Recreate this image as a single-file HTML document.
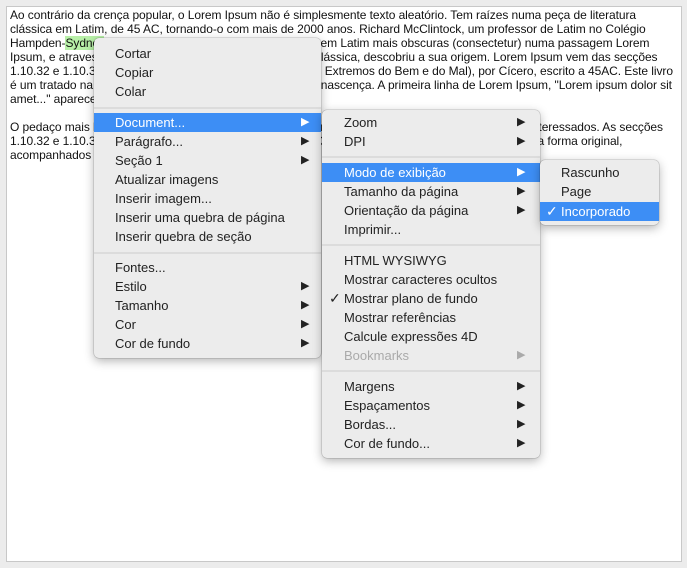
<!DOCTYPE html>
<html><head><meta charset="utf-8"><style>
*{margin:0;padding:0;box-sizing:border-box}
body{width:687px;height:568px;background:#ececec;position:relative;overflow:hidden;font-family:"Liberation Sans",Arial,sans-serif}
#doc{position:absolute;left:6px;top:6px;width:676px;height:556px;background:#fff;border:1px solid #c8c8c8;padding:1px 2px 1px 3px;font-size:12px;line-height:14px;color:#111;letter-spacing:-0.07px}
#doc p{margin-bottom:14px}
.hl{background:#b8f0a8}
.m{position:absolute;background:#ececec;border-radius:5px;box-shadow:0 3px 10px rgba(0,0,0,.3),0 0 0 .5px rgba(0,0,0,.2);font-size:13px;color:#222}
.i{position:absolute;left:0;right:0;height:19px;line-height:19px}
.i.s{background:#3d8ef5;color:#fff}
.i.d{color:#aaa}
.a{position:absolute;font-size:11px;top:0}
.sep{position:absolute;left:0;right:0;height:2px;background:#dcdcdc}
.ck{position:absolute;font-size:14px}
</style></head><body>
<div id="doc"><p>Ao contrário da crença popular, o Lorem Ipsum não é simplesmente texto aleatório. Tem raízes numa peça de literatura clássica em Latim, de 45 AC, tornando-o com mais de 2000 anos. Richard McClintock, um professor de Latim no Colégio Hampden-<span class="hl">Sydney</span>, na Virgínia, procurou uma das palavras em Latim mais obscuras (consectetur) numa passagem Lorem Ipsum, e atravessando as cidades do mundo na literatura clássica, descobriu a sua origem. Lorem Ipsum vem das secções 1.10.32 e 1.10.33 do "de Finibus Bonorum et Malorum" (Os Extremos do Bem e do Mal), por Cícero, escrito a 45AC. Este livro é um tratado na teoria da ética, muito popular durante a Renascença. A primeira linha de Lorem Ipsum, "Lorem ipsum dolor sit amet..." aparece de uma linha na secção 1.10.32.</p>
<p>O pedaço mais habitual do Lorem Ipsum usado desde os anos 1500 é reproduzido abaixo para os interessados. As secções 1.10.32 e 1.10.33 do "de Finibus Bonorum et Malorum" de Cícero também foram reproduzidas na sua forma original, acompanhados pela versão Inglesa da tradução feita por H. Rackham em 1914.</p></div>

<div class="m" style="left:94px;top:38px;width:227px;height:320px">
<div class="i" style="top:6px;padding-left:21px">Cortar</div>
<div class="i" style="top:25px;padding-left:21px">Copiar</div>
<div class="i" style="top:44px;padding-left:21px">Colar</div>
<div class="sep" style="top:69px"></div>
<div class="i s" style="top:75px;padding-left:21px">Document...<span class="a" style="left:207px">▶</span></div>
<div class="i" style="top:94px;padding-left:21px">Parágrafo...<span class="a" style="left:207px">▶</span></div>
<div class="i" style="top:113px;padding-left:21px">Seção 1<span class="a" style="left:207px">▶</span></div>
<div class="i" style="top:132px;padding-left:21px">Atualizar imagens</div>
<div class="i" style="top:151px;padding-left:21px">Inserir imagem...</div>
<div class="i" style="top:170px;padding-left:21px">Inserir uma quebra de página</div>
<div class="i" style="top:189px;padding-left:21px">Inserir quebra de seção</div>
<div class="sep" style="top:214px"></div>
<div class="i" style="top:220px;padding-left:21px">Fontes...</div>
<div class="i" style="top:239px;padding-left:21px">Estilo<span class="a" style="left:207px">▶</span></div>
<div class="i" style="top:258px;padding-left:21px">Tamanho<span class="a" style="left:207px">▶</span></div>
<div class="i" style="top:277px;padding-left:21px">Cor<span class="a" style="left:207px">▶</span></div>
<div class="i" style="top:296px;padding-left:21px">Cor de fundo<span class="a" style="left:207px">▶</span></div>
</div>

<div class="m" style="left:322px;top:110px;width:218px;height:348px">
<div class="i" style="top:3px;padding-left:22px">Zoom<span class="a" style="left:195px">▶</span></div>
<div class="i" style="top:22px;padding-left:22px">DPI<span class="a" style="left:195px">▶</span></div>
<div class="sep" style="top:46px"></div>
<div class="i s" style="top:53px;padding-left:22px">Modo de exibição<span class="a" style="left:195px">▶</span></div>
<div class="i" style="top:72px;padding-left:22px">Tamanho da página<span class="a" style="left:195px">▶</span></div>
<div class="i" style="top:91px;padding-left:22px">Orientação da página<span class="a" style="left:195px">▶</span></div>
<div class="i" style="top:110px;padding-left:22px">Imprimir...</div>
<div class="sep" style="top:134px"></div>
<div class="i" style="top:141px;padding-left:22px">HTML WYSIWYG</div>
<div class="i" style="top:160px;padding-left:22px">Mostrar caracteres ocultos</div>
<div class="i" style="top:179px;padding-left:22px"><span class="ck" style="left:7px">✓</span>Mostrar plano de fundo</div>
<div class="i" style="top:198px;padding-left:22px">Mostrar referências</div>
<div class="i" style="top:217px;padding-left:22px">Calcule expressões 4D</div>
<div class="i d" style="top:236px;padding-left:22px">Bookmarks<span class="a" style="left:195px">▶</span></div>
<div class="sep" style="top:260px"></div>
<div class="i" style="top:267px;padding-left:22px">Margens<span class="a" style="left:195px">▶</span></div>
<div class="i" style="top:286px;padding-left:22px">Espaçamentos<span class="a" style="left:195px">▶</span></div>
<div class="i" style="top:305px;padding-left:22px">Bordas...<span class="a" style="left:195px">▶</span></div>
<div class="i" style="top:324px;padding-left:22px">Cor de fundo...<span class="a" style="left:195px">▶</span></div>
</div>

<div class="m" style="left:540px;top:160px;width:119px;height:65px">
<div class="i" style="top:3px;padding-left:21px">Rascunho</div>
<div class="i" style="top:22px;padding-left:21px">Page</div>
<div class="i s" style="top:42px;padding-left:21px"><span class="ck" style="left:6px">✓</span>Incorporado</div>
</div>
</body></html>
